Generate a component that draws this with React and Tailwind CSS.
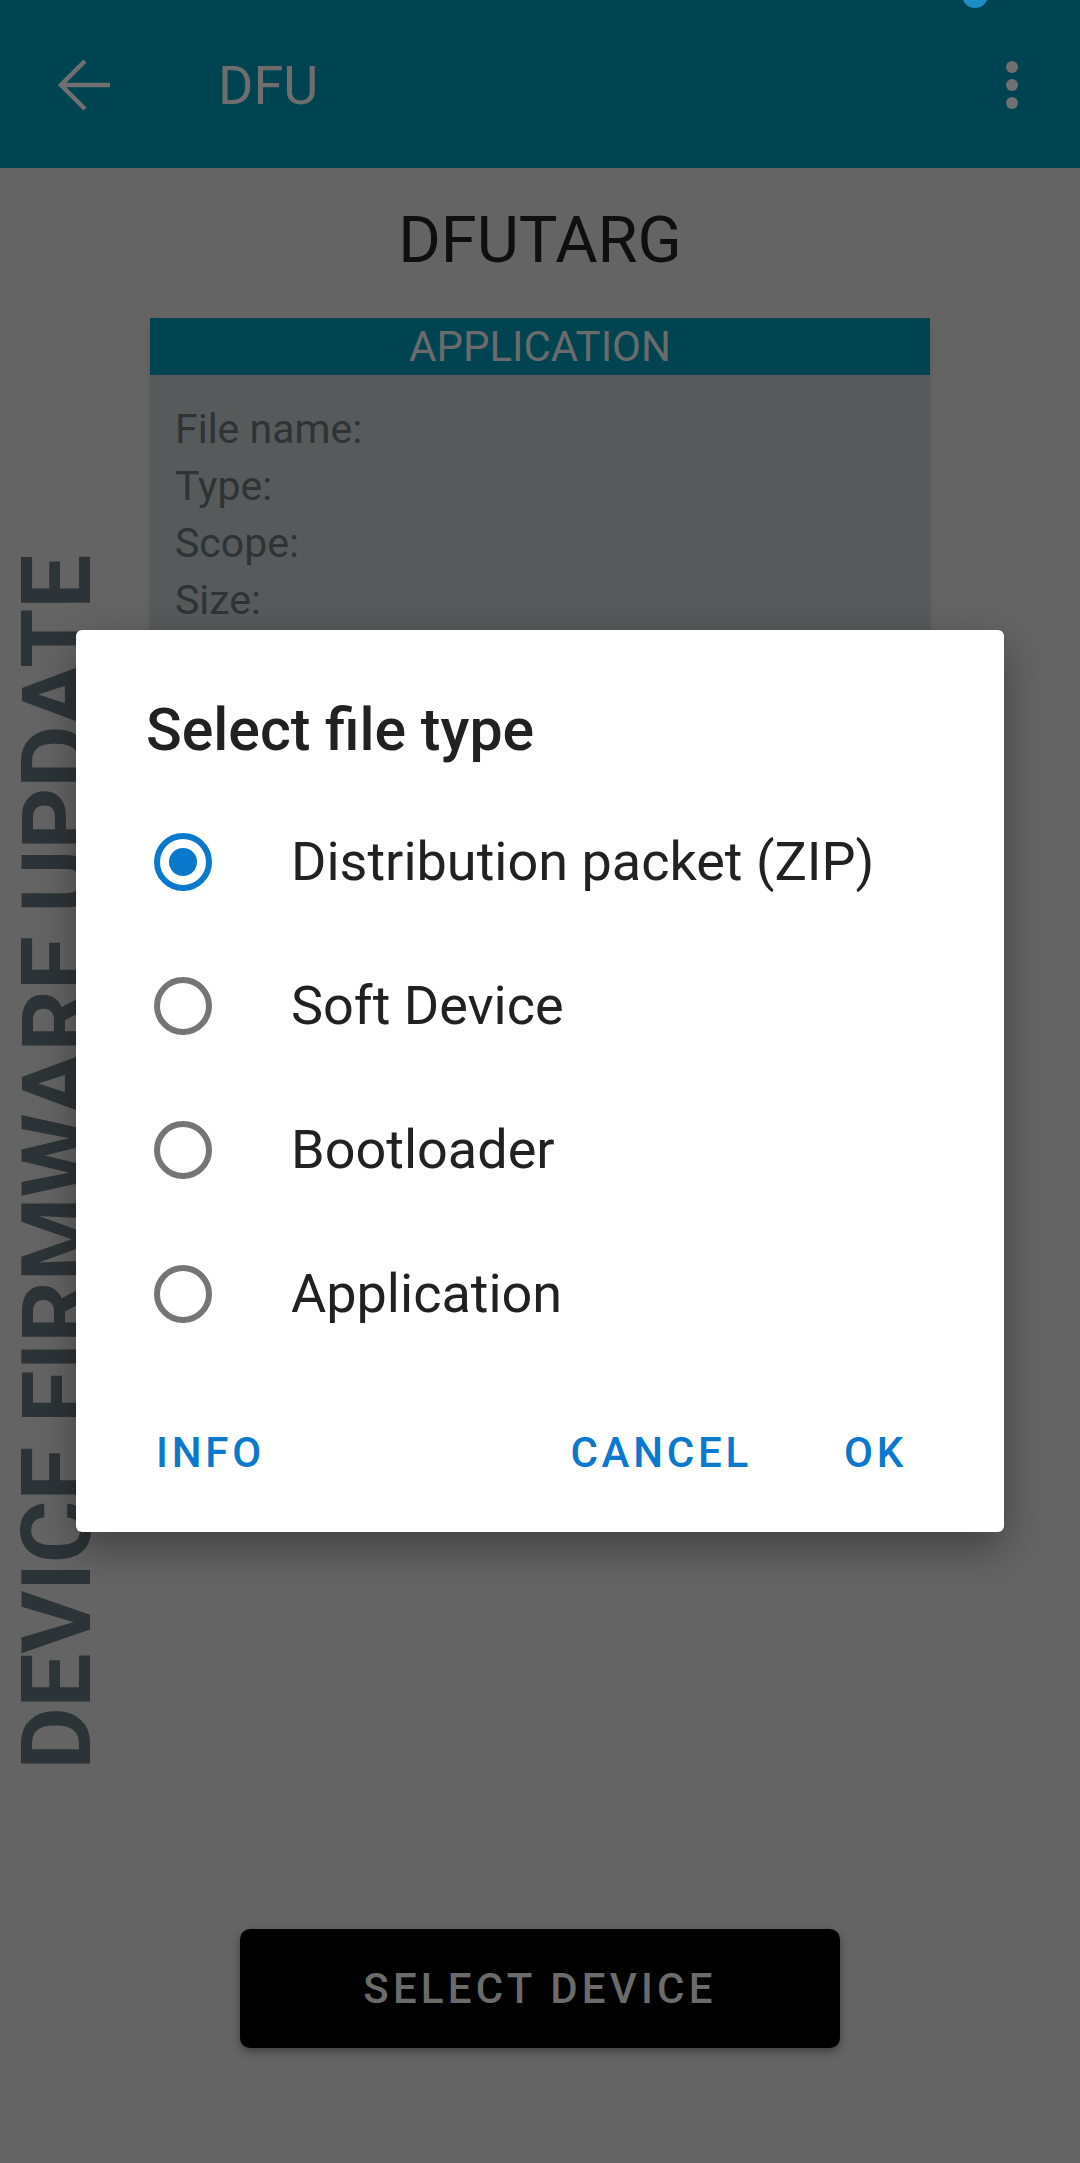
import React from "react";

function Radio({ checked }) {
  return (
    <div
      className={
        "w-[58px] h-[58px] rounded-full border-[6px] flex items-center justify-center shrink-0 " +
        (checked ? "border-[#0a78cc]" : "border-[#757575]")
      }
    >
      {checked && <div className="w-[28px] h-[28px] rounded-full bg-[#0a78cc]" />}
    </div>
  );
}

export default function App() {
  const options = [
    { label: "Distribution packet (ZIP)", checked: true },
    { label: "Soft Device", checked: false },
    { label: "Bootloader", checked: false },
    { label: "Application", checked: false },
  ];
  return (
    <div className="relative w-[1080px] h-[2163px] bg-[#646464] overflow-hidden font-['Roboto',sans-serif] flex flex-col">
      {/* App bar */}
      <div className="relative h-[168px] bg-[#004452] flex items-center shrink-0">
        <div className="absolute right-[92px] top-[-18px] w-[26px] h-[26px] rounded-full bg-[#1b8fc6]" />
        <svg width="60" height="60" viewBox="0 0 60 60" className="ml-[55px] mt-[2px]">
          <path d="M55 30H6 M30 6L6 30L30 54" fill="none" stroke="#707070" strokeWidth="4.5" strokeLinecap="butt" strokeLinejoin="miter" />
        </svg>
        <div className="ml-[103px] mt-[4px] text-[54px] leading-none text-[#6e6e6e]">DFU</div>
        <div className="ml-auto mr-[62px] mt-[2px] flex flex-col gap-[6px]">
          <div className="w-[12px] h-[12px] rounded-full bg-[#707070]" />
          <div className="w-[12px] h-[12px] rounded-full bg-[#707070]" />
          <div className="w-[12px] h-[12px] rounded-full bg-[#707070]" />
        </div>
      </div>

      {/* Content */}
      <div className="flex flex-col items-center flex-1">
        <div className="mt-[40px] text-[65px] leading-none text-[#0f0f0f]">DFUTARG</div>
        <div className="mt-[45px] w-[780px] shadow-md">
          <div className="h-[57px] bg-[#004452] flex items-center justify-center text-[42px] leading-none text-[#6b6b6b]">
            APPLICATION
          </div>
          <div className="h-[400px] bg-[#565a5b] pt-[26px] pl-[25px] text-[41px] leading-[57px] text-[#2e3335]">
            <div>File name:</div>
            <div>Type:</div>
            <div>Scope:</div>
            <div>Size:</div>
          </div>
        </div>
        <div className="flex-1" />
        <div className="mb-[115px] w-[600px] h-[119px] rounded-[10px] bg-black shadow-[0_4px_8px_rgba(0,0,0,0.35)] flex items-center justify-center text-[42px] leading-none font-medium tracking-[0.1em] text-[#6b6b6b]">
          SELECT DEVICE
        </div>
      </div>

      {/* Vertical text */}
      <div className="absolute left-[9px] bottom-[393px] [writing-mode:vertical-rl] rotate-180 text-[96px] leading-none font-bold tracking-[-0.002em] text-[#2d3437] whitespace-nowrap">
        DEVICE FIRMWARE UPDATE
      </div>

      {/* Dialog */}
      <div className="absolute left-[76px] top-[630px] w-[928px] h-[902px] bg-white rounded-[6px] shadow-[0_16px_40px_rgba(0,0,0,0.35)] flex flex-col">
        <div className="pt-[70px] pl-[70px] text-[59px] leading-none font-medium text-[#212121]">
          Select file type
        </div>
        <div className="mt-[31px] flex flex-col">
          {options.map((o) => (
            <div key={o.label} className="h-[144px] flex items-center pl-[78px]">
              <Radio checked={o.checked} />
              <div className="ml-[79px] text-[54px] leading-none text-[#212121]">{o.label}</div>
            </div>
          ))}
        </div>
        <div className="mt-[66px] flex items-center text-[42px] leading-none font-medium tracking-[0.09em] text-[#0a78cc]">
          <div className="ml-[80px]">INFO</div>
          <div className="ml-auto">CANCEL</div>
          <div className="ml-[92px] mr-[97px]">OK</div>
        </div>
      </div>
    </div>
  );
}
